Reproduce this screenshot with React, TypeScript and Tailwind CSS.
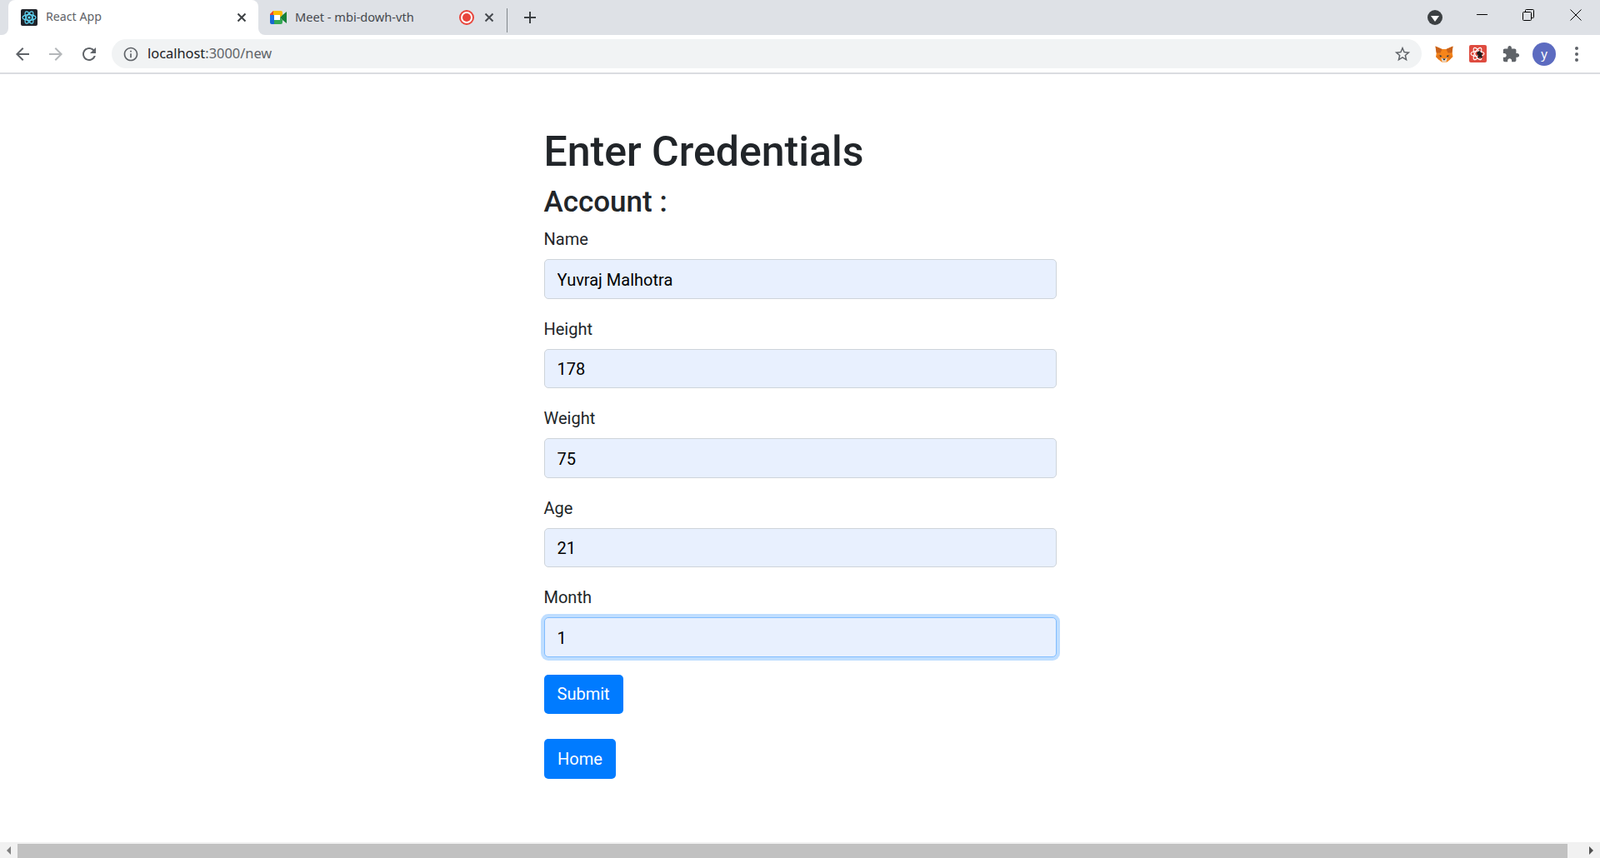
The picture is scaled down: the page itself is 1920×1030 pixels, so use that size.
const sans = "font-['Noto_Sans','Liberation_Sans',sans-serif]";
const content = "font-['Roboto','Liberation_Sans',sans-serif]";

function ReactLogo() {
  return (
    <svg width="20" height="20" viewBox="0 0 20 20" className="shrink-0">
      <rect width="20" height="20" rx="2" fill="#20232a" />
      <g fill="none" stroke="#61dafb" strokeWidth="1.2">
        <ellipse cx="10" cy="10" rx="8" ry="3.4" />
        <ellipse cx="10" cy="10" rx="8" ry="3.4" transform="rotate(60 10 10)" />
        <ellipse cx="10" cy="10" rx="8" ry="3.4" transform="rotate(120 10 10)" />
      </g>
      <circle cx="10" cy="10" r="1.6" fill="#61dafb" />
    </svg>
  );
}

function MeetLogo() {
  return (
    <svg width="20" height="18" viewBox="0 0 20 18" className="shrink-0">
      <rect x="5" y="6" width="7" height="6" fill="#fff" />
      <path d="M4 1h8v5H5v1H0V5z" fill="#fbbc04" />
      <path d="M12 1h1a2 2 0 0 1 2 2v3l-3 3V6z" fill="#fbbc04" />
      <path d="M0 6h5v6H0z" fill="#1a73e8" />
      <path d="M0 12h5v5H2a2 2 0 0 1-2-2z" fill="#1967d2" />
      <path d="M5 12h7V9l3 3v3a2 2 0 0 1-2 2H5z" fill="#34a853" />
      <path d="M15 6l5-4v14l-5-4-3-3z" fill="#188038" />
      <path d="M0 5l4-4v5H0z" fill="#ea4335" />
    </svg>
  );
}

function Fox() {
  return (
    <svg width="22" height="20" viewBox="0 0 22 20" className="shrink-0">
      <path d="M0.5 0.5l8 3.5h5l8-3.5-1 7 1 5.5-4 4-3 2.5H8l-3-2.5-4-4 1-5.5z" fill="#f6851b" />
      <path d="M0.5 0.5l8 3.5-2 4.5H1.5z" fill="#c9621a" />
      <path d="M21.5 0.5l-8 3.5 2 4.5h5z" fill="#c9621a" />
      <path d="M1 13l4-3 2 3-2 4z" fill="#e2761b" />
      <path d="M21 13l-4-3-2 3 2 4z" fill="#e2761b" />
      <path d="M5.5 11l3 1.2-2.2 1.2z" fill="#233447" />
      <path d="M16.5 11l-3 1.2 2.2 1.2z" fill="#233447" />
      <path d="M7.5 15h7l-1 4h-5z" fill="#e4d7c9" />
      <path d="M9 15.5h4L11 17.5z" fill="#161616" />
    </svg>
  );
}

function RedExtension() {
  return (
    <svg width="21" height="21" viewBox="0 0 21 21" className="shrink-0">
      <rect width="21" height="21" rx="2" fill="#de4b3f" />
      <g fill="none" stroke="#fff" strokeWidth="1.1">
        <ellipse cx="10" cy="10.5" rx="8" ry="3.2" />
        <ellipse cx="10" cy="10.5" rx="8" ry="3.2" transform="rotate(60 10 10.5)" />
        <ellipse cx="10" cy="10.5" rx="8" ry="3.2" transform="rotate(120 10 10.5)" />
      </g>
      <path d="M10 8l3-1 1 2 2 1-1 2 1 3-2 1-1-2-1 2-2-1 1-3-2-1z" fill="#1c1c1c" />
    </svg>
  );
}

function Glyph({ d, size = 24, color = "#5f6368" }: { d: string; size?: number; color?: string }) {
  return (
    <svg width={size} height={size} viewBox="0 0 24 24" fill={color} className="shrink-0">
      <path d={d} />
    </svg>
  );
}

function CloseIcon({ color = "#3c4043" }: { color?: string }) {
  return (
    <svg width="12" height="12" viewBox="0 0 12 12" stroke={color} strokeWidth="2" className="shrink-0">
      <path d="M1.5 1.5l9 9M10.5 1.5l-9 9" />
    </svg>
  );
}

function TabStrip() {
  return (
    <div className="flex h-[42px] bg-[#dee1e6]">
      <div className="w-[10px] bg-white">
        <div className="h-full rounded-br-[8px] bg-[#dee1e6]" />
      </div>
      <div className="flex h-full w-[300px] items-center rounded-t-[8px] bg-white pl-[15px] pr-[14px]">
        <ReactLogo />
        <span className="ml-[10px] flex-1 pb-[2px] text-[14.2px] text-[#5f6368]">React App</span>
        <CloseIcon />
      </div>
      <div className="w-[10px] bg-white">
        <div className="h-full rounded-bl-[8px] bg-[#dee1e6]" />
      </div>
      <div className="flex h-full w-[288px] items-center pl-[4px] pr-[15px]">
        <MeetLogo />
        <span className="ml-[10px] flex-1 pb-[1px] text-[14.6px] text-[#45494e]">Meet - mbi-dowh-vth</span>
        <span className="mr-[12px] flex h-[18px] w-[18px] items-center justify-center rounded-full border-2 border-[#e8453c] bg-white">
          <span className="h-[10px] w-[10px] rounded-full bg-[#e8453c]" />
        </span>
        <CloseIcon color="#45494e" />
      </div>
      <div className="mt-[10px] mb-[3px] w-px bg-[#80868b]" />
      <div className="ml-[15px] flex items-center">
        <Glyph d="M19 13h-6v6h-2v-6H5v-2h6V5h2v6h6v2z" size={24} color="#3c4043" />
      </div>
      <div className="flex-1" />
      <div className="mr-[19px] flex items-center">
        <div className="flex h-[18px] w-[18px] items-center justify-center rounded-full bg-[#3c4043]">
          <span className="mt-[2px] h-0 w-0 border-x-[5px] border-t-[7px] border-x-transparent border-t-white" />
        </div>
      </div>
      <div className="flex items-start pt-[11px]">
        <div className="flex w-[56px] justify-center pt-[6px]">
          <span className="h-px w-[13px] bg-black" />
        </div>
        <div className="flex w-[56px] justify-center">
          <svg width="14" height="14" viewBox="0 0 14 14" fill="none" stroke="#000">
            <rect x="0.5" y="3.5" width="10" height="10" rx="1" />
            <path d="M3.5 3.5V1.5a1 1 0 0 1 1-1h8a1 1 0 0 1 1 1v8a1 1 0 0 1-1 1h-2" />
          </svg>
        </div>
        <div className="flex w-[58px] justify-center">
          <svg width="14" height="14" viewBox="0 0 14 14" stroke="#000">
            <path d="M0.5 0.5l13 13M13.5 0.5l-13 13" />
          </svg>
        </div>
      </div>
    </div>
  );
}

function Toolbar() {
  return (
    <div className="flex h-[47px] items-center border-b-2 border-[#dadce0] bg-white">
      <div className="flex items-center gap-[16px] pl-[15px]">
        <Glyph d="M20 11H7.83l5.59-5.59L12 4l-8 8 8 8 1.41-1.41L7.83 13H20v-2z" />
        <Glyph d="M12 4l-1.41 1.41L16.17 11H4v2h12.17l-5.58 5.59L12 20l8-8z" color="#b4b7ba" />
        <Glyph d="M17.65 6.35C16.2 4.9 14.21 4 12 4c-4.42 0-7.99 3.58-7.99 8s3.57 8 7.99 8c3.73 0 6.84-2.55 7.73-6h-2.08c-.82 2.33-3.04 4-5.65 4-3.31 0-6-2.69-6-6s2.69-6 6-6c1.66 0 3.14.69 4.22 1.78L13 11h7V4l-2.35 2.35z" />
      </div>
      <div className="ml-[15px] flex h-[35px] flex-1 items-center rounded-full bg-[#f1f3f4] pl-[13px] pr-[12px]">
        <Glyph d="M11 7h2v2h-2zm0 4h2v6h-2zm1-9C6.48 2 2 6.48 2 12s4.48 10 10 10 10-4.48 10-10S17.52 2 12 2zm0 18c-4.41 0-8-3.59-8-8s3.59-8 8-8 8 3.59 8 8-3.59 8-8 8z" size={20} />
        <span className="ml-[10px] flex-1 text-[16.4px] text-[#5f6368]">
          <span className="text-[#202124]">localhost</span>:3000/new
        </span>
        <Glyph d="M22 9.24l-7.19-.62L12 2 9.19 8.63 2 9.24l5.46 4.73L5.82 21 12 17.27 18.18 21l-1.63-7.03L22 9.24zM12 15.4l-3.76 2.27 1-4.28-3.32-2.88 4.38-.38L12 6.1l1.71 4.04 4.38.38-3.32 2.88 1 4.28L12 15.4z" size={22} />
      </div>
      <div className="flex items-center pl-[7px] pr-[15px]">
        <div className="flex w-[40px] justify-center"><Fox /></div>
        <div className="flex w-[40px] justify-center"><RedExtension /></div>
        <div className="flex w-[40px] justify-center">
          <Glyph d="M20.5 11H19V7c0-1.1-.9-2-2-2h-4V3.5C13 2.12 11.88 1 10.5 1S8 2.12 8 3.5V5H4c-1.1 0-1.99.9-1.99 2v3.8H3.5c1.49 0 2.7 1.21 2.7 2.7s-1.21 2.7-2.7 2.7H2V20c0 1.1.9 2 2 2h3.8v-1.5c0-1.49 1.21-2.7 2.7-2.7 1.49 0 2.7 1.21 2.7 2.7V22H17c1.1 0 2-.9 2-2v-4h1.5c1.38 0 2.5-1.12 2.5-2.5S21.88 11 20.5 11z" size={22} />
        </div>
        <div className="mx-[6px] flex h-[28px] w-[28px] items-center justify-center rounded-full bg-[#5c6bc0] text-[15px] text-white">
          y
        </div>
        <div className="ml-[6px] flex w-[26px] flex-col items-center gap-[3px]">
          <span className="h-[4px] w-[4px] rounded-full bg-[#5f6368]" />
          <span className="h-[4px] w-[4px] rounded-full bg-[#5f6368]" />
          <span className="h-[4px] w-[4px] rounded-full bg-[#5f6368]" />
        </div>
      </div>
    </div>
  );
}

const fields = [
  { label: "Name", value: "Yuvraj Malhotra" },
  { label: "Height", value: "178" },
  { label: "Weight", value: "75" },
  { label: "Age", value: "21" },
];

function Field({ label, value, focused }: { label: string; value: string; focused?: boolean }) {
  return (
    <div className="mb-[21px]">
      <label className="mb-[9px] block text-[20px] leading-[30px] text-[#212529]">{label}</label>
      <input
        readOnly
        value={value}
        className={
          focused
            ? "block h-[47.5px] w-full rounded-[5px] border border-[#80bdff] bg-[#e8f0fe] px-[15px] pt-[2px] text-[20px] text-black shadow-[0_0_0_4px_rgba(0,123,255,0.25)] outline-none"
            : "block h-[47.5px] w-full rounded-[5px] border border-[#ced4da] bg-[#e8f0fe] px-[15px] pt-[2px] text-[20px] text-black outline-none"
        }
      />
    </div>
  );
}

function Scrollbar() {
  return (
    <div className="flex h-[19px] items-stretch bg-[#f1f1f1]">
      <div className="flex w-[21px] items-center justify-center">
        <span className="h-0 w-0 border-y-[5px] border-r-[5px] border-y-transparent border-r-[#7f7f7f]" />
      </div>
      <div className="mt-[2px] flex-1 bg-[#c1c1c1]" />
      <div className="flex w-[39px] items-center justify-center pl-[18px]">
        <span className="h-0 w-0 border-y-[5px] border-l-[5px] border-y-transparent border-l-[#505050]" />
      </div>
    </div>
  );
}

export default function App() {
  return (
    <div className={`flex h-[1030px] w-full flex-col overflow-hidden bg-white ${sans}`}>
      <TabStrip />
      <Toolbar />
      <main className={`flex-1 overflow-hidden bg-white pt-[63px] ${content}`}>
        <div className="mx-auto w-[615px]">
          <h1 className="mb-[10px] text-[50px] font-medium leading-[60px] text-[#212529]">Enter Credentials</h1>
          <h3 className="mb-[8px] text-[35px] font-medium leading-[42px] text-[#212529]">Account :</h3>
          <form>
            {fields.map((field) => (
              <Field key={field.label} label={field.label} value={field.value} />
            ))}
            <Field label="Month" value="1" focused />
            <button type="button" className="block h-[47.5px] rounded-[5px] bg-[#007bff] px-[16px] text-[20px] text-white">
              Submit
            </button>
          </form>
          <button type="button" className="mt-[30px] block h-[47.5px] rounded-[5px] bg-[#007bff] px-[16.5px] text-[20px] text-white">
            Home
          </button>
        </div>
      </main>
      <Scrollbar />
    </div>
  );
}
